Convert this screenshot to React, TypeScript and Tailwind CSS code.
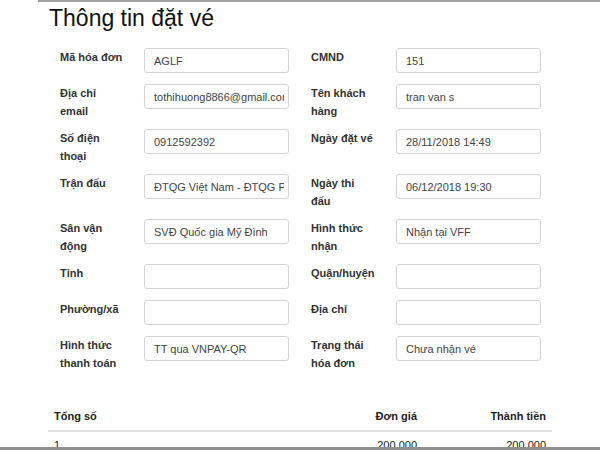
type Field = { label: string[]; value: string };

const rows: [Field, Field][] = [
  [
    { label: ["Mã hóa đơn"], value: "AGLF" },
    { label: ["CMND"], value: "151" },
  ],
  [
    { label: ["Địa chỉ", "email"], value: "tothihuong8866@gmail.com" },
    { label: ["Tên khách", "hàng"], value: "tran van s" },
  ],
  [
    { label: ["Số điện", "thoại"], value: "0912592392" },
    { label: ["Ngày đặt vé"], value: "28/11/2018 14:49" },
  ],
  [
    { label: ["Trận đấu"], value: "ĐTQG Việt Nam - ĐTQG Philippines" },
    { label: ["Ngày thi", "đấu"], value: "06/12/2018 19:30" },
  ],
  [
    { label: ["Sân vận", "động"], value: "SVĐ Quốc gia Mỹ Đình" },
    { label: ["Hình thức", "nhận"], value: "Nhận tại VFF" },
  ],
  [
    { label: ["Tỉnh"], value: "" },
    { label: ["Quận/huyện"], value: "" },
  ],
  [
    { label: ["Phường/xã"], value: "" },
    { label: ["Địa chỉ"], value: "" },
  ],
  [
    { label: ["Hình thức", "thanh toán"], value: "TT qua VNPAY-QR" },
    { label: ["Trạng thái", "hóa đơn"], value: "Chưa nhận vé" },
  ],
];

function FormField({ field, labelWidth }: { field: Field; labelWidth: string }) {
  return (
    <div className="flex items-start">
      <div className={`${labelWidth} shrink-0 text-[11px] font-bold leading-[18px] text-[#333]`}>
        {field.label.map((line) => (
          <div key={line}>{line}</div>
        ))}
      </div>
      <input
        readOnly
        value={field.value}
        className="mb-[2px] h-[25px] w-[145px] shrink-0 rounded-[3px] border border-[#d4d4d4] bg-white pl-[9px] pr-[4px] text-[11px] text-[#444] outline-none"
      />
    </div>
  );
}

export default function App() {
  return (
    <div
      className="flex h-[450px] w-[600px] flex-col overflow-hidden bg-white"
      style={{ fontFamily: '"Liberation Sans", Arial, sans-serif' }}
    >
      <div className="min-h-0 flex-1 overflow-hidden">
        <div className="ml-[38px] border-t-2 border-[#a3a3a3]">
          <h1 className="mt-[4px] pl-[11px] text-[23px] leading-[25px] font-normal text-[#111]">
            Thông tin đặt vé
          </h1>

          <div className="mt-[17px] pl-[22px]">
            {rows.map(([left, right], i) => (
              <div key={i} className="mb-[9px] flex items-start">
                <div className="w-[251px] shrink-0">
                  <FormField field={left} labelWidth="w-[84px]" />
                </div>
                <FormField field={right} labelWidth="w-[85px]" />
              </div>
            ))}
          </div>

          <div className="mt-[27px] ml-[10px] w-[504px] text-[11px] text-[#222]">
            <div className="flex border-b-2 border-[#e2e2e2] pt-[8px] pb-[5px] font-bold leading-[18px]">
              <div className="flex-1 pl-[6px]">Tổng số</div>
              <div className="w-[100px] pr-[6px] text-right">Đơn giá</div>
              <div className="w-[129px] pr-[6px] text-right">Thành tiền</div>
            </div>
            <div className="flex pt-[4px] leading-[18px]">
              <div className="flex-1 pl-[6px]">1</div>
              <div className="w-[100px] pr-[6px] text-right">200.000</div>
              <div className="w-[129px] pr-[6px] text-right">200.000</div>
            </div>
          </div>
        </div>
      </div>
      <div className="h-[3px] shrink-0 bg-[#8f8f8f]" />
    </div>
  );
}
